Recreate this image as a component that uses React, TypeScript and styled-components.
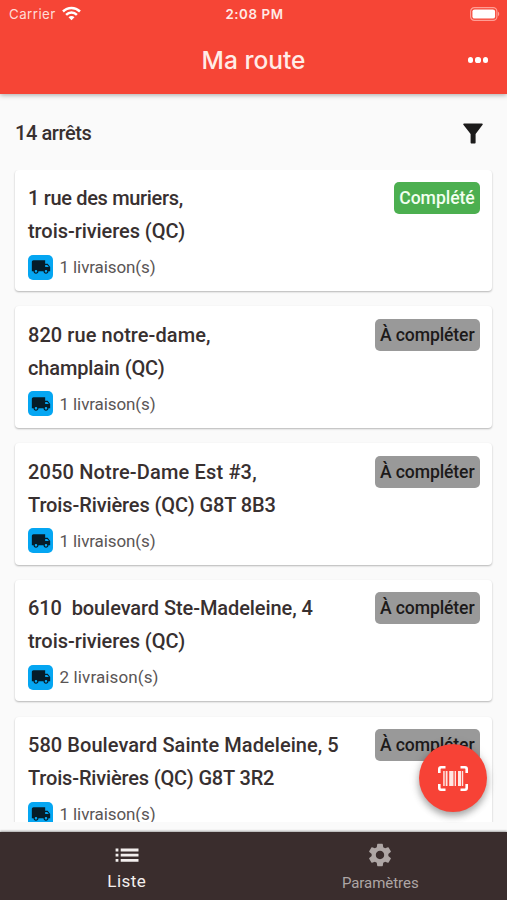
import React from "react";
import styled, { createGlobalStyle } from "styled-components";

const GlobalStyle = createGlobalStyle`
  * { box-sizing: border-box; }
  body { margin: 0; background: #fafafa; font-family: Roboto, "Liberation Sans", sans-serif; }
`;

const Screen = styled.div`
  width: 507px;
  height: 900px;
  display: flex;
  flex-direction: column;
  overflow: hidden;
  background: #fafafa;
  position: relative;
`;

const Header = styled.header`
  flex: none;
  height: 94px;
  background: #f64536;
  color: #fff;
  box-shadow: 0 1px 5px rgba(0, 0, 0, 0.34);
`;

const StatusBar = styled.div`
  height: 27px;
  padding: 0 7px 0 9px;
  display: grid;
  grid-template-columns: 1fr auto 1fr;
  align-items: center;
  font-family: Inter, sans-serif;
  font-size: 13.3px;
`;

const Carrier = styled.div`
  display: flex;
  align-items: center;
  gap: 6px;
  color: #ffdcd6;
  letter-spacing: 0.45px;
`;

const Clock = styled.div`
  font-weight: 600;
  color: #ffeae6;
  letter-spacing: 0.6px;
`;

const Battery = styled.div`
  display: flex;
  justify-content: flex-end;
`;

const TitleBar = styled.div`
  height: 66px;
  padding: 0 19px;
  display: grid;
  grid-template-columns: 1fr auto 1fr;
  align-items: center;
`;

const Title = styled.h1`
  grid-column: 2;
  margin: 0;
  font: 500 24.5px Inter, sans-serif;
  color: #ffece7;
`;

const MoreButton = styled.div`
  display: flex;
  justify-content: flex-end;
  gap: 2.2px;
`;

const Dot = styled.span`
  width: 5.2px;
  height: 5.2px;
  border-radius: 50%;
  background: #fff;
`;

const Summary = styled.div`
  flex: none;
  height: 75.5px;
  padding: 4px 24px 0 15px;
  display: flex;
  align-items: center;
  justify-content: space-between;
`;

const Line = styled.div<{ $track?: number }>`
  height: 33px;
  line-height: 33px;
  font-size: 20px;
  font-weight: 500;
  color: #383030;
  white-space: pre;
  letter-spacing: ${(p) => p.$track ?? 0}px;
`;

const List = styled.main`
  flex: none;
  height: 652.5px;
  padding: 0 15px;
  display: flex;
  flex-direction: column;
  gap: 15.3px;
  overflow: hidden;
`;

const Card = styled.article`
  flex: none;
  height: 121.5px;
  padding: 12.5px 12px 0 13px;
  display: flex;
  justify-content: space-between;
  align-items: flex-start;
  background: #fff;
  border-radius: 4px;
  box-shadow: 0 1px 2px rgba(0, 0, 0, 0.28);
`;

const Deliveries = styled.div<{ $track: number }>`
  height: 25px;
  margin-top: 6.5px;
  display: flex;
  align-items: center;
  gap: 6.5px;
  font-size: 17px;
  color: #5a5555;
  letter-spacing: ${(p) => p.$track}px;
`;

const TruckTile = styled.span`
  width: 25px;
  height: 25px;
  border-radius: 5px;
  background: #05a6f2;
  display: grid;
  place-items: center;
`;

const Badge = styled.span<{ $done?: boolean }>`
  height: 32px;
  width: ${(p) => (p.$done ? 86 : 105.5)}px;
  border-radius: 5px;
  line-height: 33px;
  text-align: center;
  font-size: 17.6px;
  font-weight: 500;
  letter-spacing: ${(p) => (p.$done ? -0.05 : -0.12)}px;
  color: ${(p) => (p.$done ? "#f2fff0" : "#1c1a1a")};
  background: ${(p) => (p.$done ? "#4caf50" : "#999")};
`;

const Fab = styled.button`
  position: absolute;
  left: 419px;
  top: 744px;
  width: 68px;
  height: 68px;
  padding: 0;
  border: 0;
  border-radius: 50%;
  background: #f74236;
  display: grid;
  place-items: center;
  box-shadow: 0 4px 7px rgba(0, 0, 0, 0.3), 0 1px 12px rgba(0, 0, 0, 0.12);
`;

const Nav = styled.nav`
  flex: none;
  height: 68.5px;
  margin-top: 9.5px;
  display: grid;
  grid-template-columns: 1fr 1fr;
  background: #3a2d2d;
  box-shadow: 0 -1px 2px rgba(0, 0, 0, 0.35);
`;

const Tab = styled.div<{ $active?: boolean }>`
  padding-top: 9px;
  display: flex;
  flex-direction: column;
  align-items: center;
  color: ${(p) => (p.$active ? "#f3efee" : "#aea6a5")};
`;

const TabLabel = styled.span<{ $active?: boolean }>`
  margin-top: ${(p) => (p.$active ? 2 : 4)}px;
  font-size: ${(p) => (p.$active ? 17 : 15)}px;
  line-height: 21px;
  letter-spacing: ${(p) => (p.$active ? 0.45 : -0.05)}px;
`;

const WifiIcon = () => (
  <svg width="19" height="15" viewBox="0 0 19 15" fill="none" stroke="#fff" strokeWidth="2.5">
    <path d="M1 5.5C5.8 .8 13.2 .8 18 5.5" />
    <path d="M4.1 8.8c3.1-3 7.7-3 10.8 0" />
    <path d="M9.5 14.2 6.5 11.2c1.7-1.6 4.3-1.6 6 0z" fill="#fff" stroke="none" />
  </svg>
);

const BatteryIcon = () => (
  <svg width="30" height="14" viewBox="0 0 30 14">
    <rect x="0.6" y="0.6" width="26.3" height="12.8" rx="3.8" fill="none" stroke="#ff9e95" strokeWidth="1.2" />
    <rect x="2.4" y="2.4" width="22.7" height="9.2" rx="2.2" fill="#fff" />
    <path d="M28 4.8c1.6.6 1.6 3.8 0 4.4z" fill="#ff9e95" />
  </svg>
);

const FunnelIcon = () => (
  <svg width="20" height="21" viewBox="0 0 20 21" fill="#1c1b1b">
    <path d="M1 .5h18c.7 0 1 .8.6 1.3L12.6 11v8.5c0 .6-.4 1-1 1H8.6c-.6 0-1-.4-1-1V11L.4 1.8C0 1.3.3.5 1 .5z" />
  </svg>
);

const TruckIcon = () => (
  <svg width="20" height="20" viewBox="0 0 24 24" fill="#061c28">
    <path d="M20 8h-3V4H3c-1.1 0-2 .9-2 2v11h2c0 1.66 1.34 3 3 3s3-1.34 3-3h6c0 1.66 1.34 3 3 3s3-1.34 3-3h2v-5l-3-4zM6 18.5c-.83 0-1.5-.67-1.5-1.5s.67-1.5 1.5-1.5 1.5.67 1.5 1.5-.67 1.5-1.5 1.5zm13.5-9 1.96 2.5H17V9.5h2.5zm-1.5 9c-.83 0-1.5-.67-1.5-1.5s.67-1.5 1.5-1.5 1.5.67 1.5 1.5-.67 1.5-1.5 1.5z" />
  </svg>
);

const ScanIcon = () => (
  <svg width="30" height="25" viewBox="0 0 30 25">
    <path
      d="M1.3 7V3Q1.3 1.3 3 1.3H7.5M22.5 1.3H27Q28.7 1.3 28.7 3V7M28.7 18V22Q28.7 23.7 27 23.7H22.5M7.5 23.7H3Q1.3 23.7 1.3 22V18"
      fill="none"
      stroke="#fff"
      strokeWidth="2.6"
    />
    <path d="M5.2 5h1.5v15H5.2zM7.7 5h1.8v15H7.7zM11.2 5h4.3v15h-4.3zM16.6 5h1.4v15h-1.4zM20 5h3.2v15H20zM24 5h1.2v15H24z" fill="#ffe7e3" />
  </svg>
);

const ListIcon = () => (
  <svg width="28" height="28" viewBox="0 0 28 28" fill="currentColor">
    <path d="M2.6 7.6h2.8v2.8H2.6zM2.6 12.8h2.8v2.8H2.6zM2.6 18h2.8v2.8H2.6zM7.7 7.6h17.8v2.8H7.7zM7.7 12.8h17.8v2.8H7.7zM7.7 18h17.8v2.8H7.7z" />
  </svg>
);

const GearIcon = () => (
  <svg width="28" height="28" viewBox="0 0 24 24" fill="currentColor">
    <path d="M19.14 12.94c.04-.3.06-.61.06-.94 0-.32-.02-.64-.07-.94l2.03-1.58c.18-.14.23-.41.12-.61l-1.92-3.32c-.12-.22-.37-.29-.59-.22l-2.39.96c-.5-.38-1.03-.7-1.62-.94l-.36-2.54c-.04-.24-.24-.41-.48-.41h-3.84c-.24 0-.43.17-.47.41l-.36 2.54c-.59.24-1.13.57-1.62.94l-2.39-.96c-.22-.08-.47 0-.59.22L2.74 8.87c-.12.21-.08.47.12.61l2.03 1.58c-.05.3-.09.63-.09.94s.02.64.07.94l-2.03 1.58c-.18.14-.23.41-.12.61l1.92 3.32c.12.22.37.29.59.22l2.39-.96c.5.38 1.03.7 1.62.94l.36 2.54c.05.24.24.41.48.41h3.84c.24 0 .44-.17.47-.41l.36-2.54c.59-.24 1.13-.56 1.62-.94l2.39.96c.22.08.47 0 .59-.22l1.92-3.32c.12-.22.07-.47-.12-.61l-2.01-1.58zM12 15.6c-1.98 0-3.6-1.62-3.6-3.6s1.62-3.6 3.6-3.6 3.6 1.62 3.6 3.6-1.62 3.6-3.6 3.6z" />
  </svg>
);

type TextLine = { text: string; track: number };
type Stop = { street: TextLine; city: TextLine; count: number; done?: boolean };

const stops: Stop[] = [
  { street: { text: "1 rue des muriers,", track: -0.33 }, city: { text: "trois-rivieres (QC)", track: -0.06 }, count: 1, done: true },
  { street: { text: "820 rue notre-dame,", track: 0.07 }, city: { text: "champlain (QC)", track: -0.14 }, count: 1 },
  { street: { text: "2050 Notre-Dame Est #3,", track: 0.16 }, city: { text: "Trois-Rivières (QC) G8T 8B3", track: -0.11 }, count: 1 },
  { street: { text: "610  boulevard Ste-Madeleine, 4", track: -0.08 }, city: { text: "trois-rivieres (QC)", track: -0.06 }, count: 2 },
  { street: { text: "580 Boulevard Sainte Madeleine, 5", track: 0.06 }, city: { text: "Trois-Rivières (QC) G8T 3R2", track: -0.16 }, count: 1 },
];

export default function App() {
  return (
    <>
      <GlobalStyle />
      <Screen>
        <Header>
          <StatusBar>
            <Carrier>Carrier <WifiIcon /></Carrier>
            <Clock>2:08 PM</Clock>
            <Battery><BatteryIcon /></Battery>
          </StatusBar>
          <TitleBar>
            <Title>Ma route</Title>
            <MoreButton><Dot /><Dot /><Dot /></MoreButton>
          </TitleBar>
        </Header>
        <Summary>
          <Line $track={-0.42}>14 arrêts</Line>
          <FunnelIcon />
        </Summary>
        <List>
          {stops.map((stop, i) => (
            <Card key={i}>
              <div>
                <Line $track={stop.street.track}>{stop.street.text}</Line>
                <Line $track={stop.city.track}>{stop.city.text}</Line>
                <Deliveries $track={stop.count === 1 ? -0.1 : 0.12}>
                  <TruckTile><TruckIcon /></TruckTile>
                  {stop.count} livraison(s)
                </Deliveries>
              </div>
              <Badge $done={stop.done}>{stop.done ? "Complété" : "À compléter"}</Badge>
            </Card>
          ))}
        </List>
        <Nav>
          <Tab $active><ListIcon /><TabLabel $active>Liste</TabLabel></Tab>
          <Tab><GearIcon /><TabLabel>Paramètres</TabLabel></Tab>
        </Nav>
        <Fab aria-label="Scanner"><ScanIcon /></Fab>
      </Screen>
    </>
  );
}
